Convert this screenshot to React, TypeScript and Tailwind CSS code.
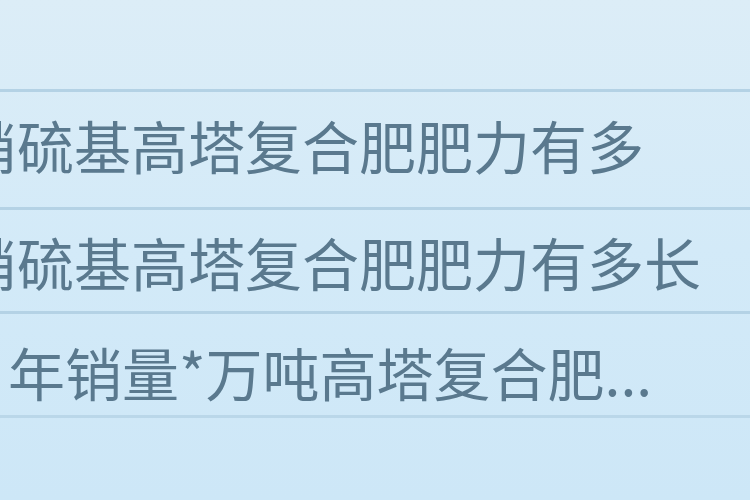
import React from "react";

export default function App() {
  const font = { fontFamily: '"Noto Sans CJK SC", "Noto Sans", sans-serif' };
  return (
    <div
      className="w-[750px] h-[500px] overflow-hidden bg-gradient-to-b from-[#dcedf7] via-[#d3eaf8] to-[#cde7f7] text-[#5a798e]"
      style={font}
    >
      <div className="h-[89px]" />
      <div className="h-[118px] border-t-[3px] border-[#b4d2e5] flex items-center pb-[10px]">
        <span className="ml-[-40px] text-[57px] leading-none whitespace-nowrap">
          硝硫基高塔复合肥肥力有多
        </span>
      </div>
      <div className="h-[104px] border-t-[3px] border-[#b4d2e5] flex items-center pt-[2px]">
        <span className="ml-[-40px] text-[57px] leading-none whitespace-nowrap">
          硝硫基高塔复合肥肥力有多长
        </span>
      </div>
      <div className="h-[104px] border-t-[3px] border-[#b4d2e5] flex items-center pt-[14px]">
        <span className="ml-[8px] text-[57px] leading-none whitespace-nowrap">
          年销量*万吨高塔复合肥...
        </span>
      </div>
      <div className="h-[85px] border-t-[3px] border-[#bad7e9]" />
    </div>
  );
}
